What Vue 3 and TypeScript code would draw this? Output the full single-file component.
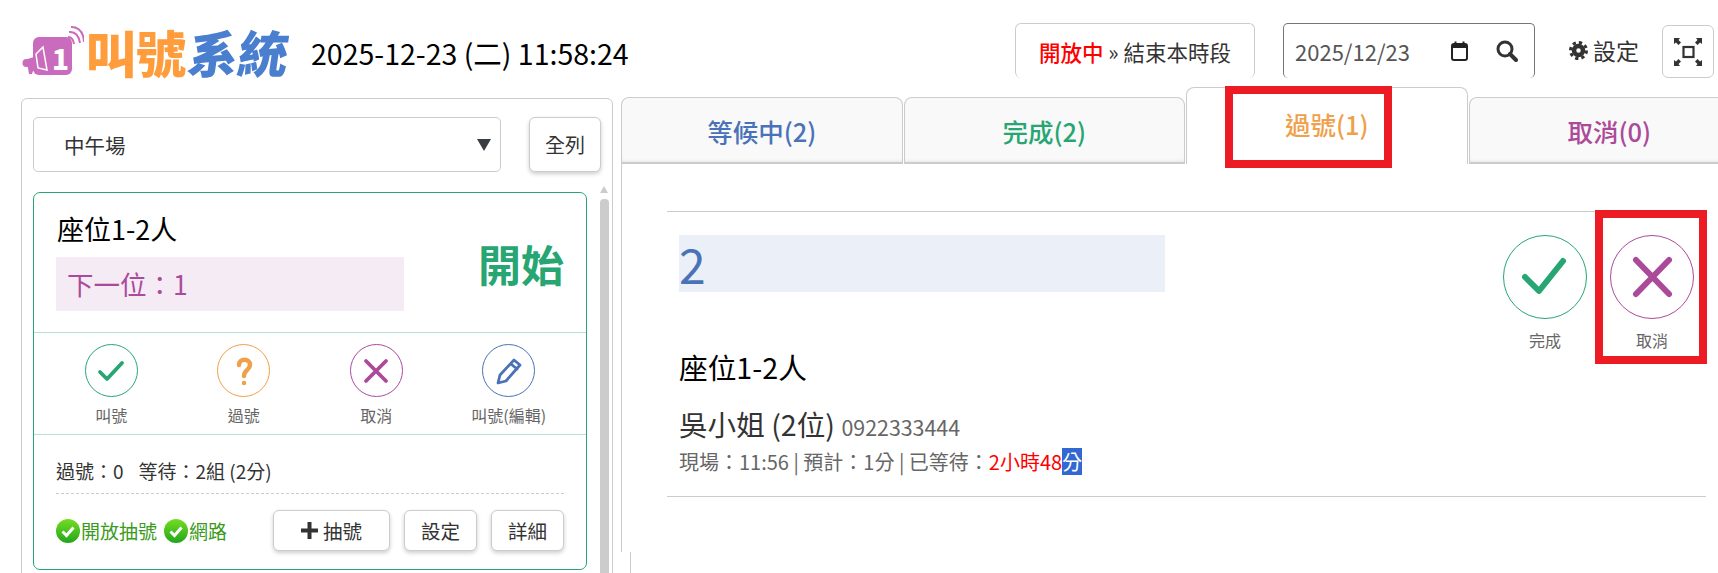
<template>
  <div class="page">
    <header class="top">
      <div class="logo">
        <svg class="logo-mark" width="62" height="54" viewBox="0 0 62 54">
          <rect x="11" y="11" width="39" height="38" rx="6" fill="#c96cbd" />
          <circle cx="4.500" cy="37" r="4" fill="#c96cbd" />
          <path d="M4 33.500 15 30v14l-4 1-1 3H7l-1-6z" fill="#c96cbd" />
          <path d="M14 28 21 21l4 23-9-2z" fill="#c96cbd" stroke="#fff" stroke-width="1.500" />
          <text x="30" y="44" class="logo-one">1</text>
          <path d="M46 11q5 0 6 7M47 6q9-1 11 11M49 1q12 0 13 15" fill="none" stroke="#c96cbd" stroke-width="2" />
        </svg>
        <div class="logo-text"><span class="orange">叫號</span><span class="blue">系統</span></div>
      </div>
      <div class="clock">2025-12-23 (二) 11:58:24</div>
      <button class="period"><span class="red">開放中</span> » 結束本時段</button>
      <div class="date-box">
        <span class="date-text">2025/12/23</span>
        <svg width="19" height="20" viewBox="0 0 19 20" class="cal">
          <rect x="2" y="3" width="15" height="16" rx="2" fill="#fff" stroke="#222" stroke-width="2" />
          <rect x="2" y="3" width="15" height="4" fill="#222" />
          <rect x="4.500" y="0.500" width="2" height="4" fill="#222" />
          <rect x="12.500" y="0.500" width="2" height="4" fill="#222" />
        </svg>
        <svg width="22" height="22" viewBox="0 0 22 22">
          <circle cx="9" cy="9" r="7" fill="none" stroke="#333" stroke-width="3" />
          <path d="M14 14l6 6" stroke="#333" stroke-width="4" stroke-linecap="round" />
        </svg>
      </div>
      <div class="settings">
        <svg width="19" height="19" viewBox="0 0 19 19">
          <circle cx="9.500" cy="9.500" r="4.500" fill="none" stroke="#333" stroke-width="4.500" />
          <circle cx="9.500" cy="9.500" r="8" fill="none" stroke="#333" stroke-width="3" stroke-dasharray="3.300 3" />
        </svg>
        <span>設定</span>
      </div>
      <button class="full">
        <svg width="28" height="28" viewBox="0 0 28 28">
          <rect x="9.500" y="9" width="10" height="10" fill="none" stroke="#333" stroke-width="2.200" />
          <path d="M0 0h6L4.500 2 7 4.500 4.500 7 2 4.500 0 6zM28 0h-6l1.500 2L21 4.500 23.500 7 26 4.500 28 6zM0 28h6l-1.500-2L7 23.500 4.500 21 2 23.500 0 22zM28 28h-6l1.500-2L21 23.500 23.500 21 26 23.500 28 22z" fill="#333" />
        </svg>
      </button>
    </header>

    <main class="main">
      <aside class="panel">
        <div class="panel-top">
          <div class="select">
            <span>中午場</span>
            <i class="caret"></i>
          </div>
          <button class="btn all">全列</button>
        </div>
        <div class="panel-body">
          <section class="card">
            <div class="card-head">
              <div class="card-info">
                <div class="card-title">座位1-2人</div>
                <div class="next">下一位：1</div>
              </div>
              <div class="start">開始</div>
            </div>
            <div class="card-actions">
              <div v-for="a in cardActions" :key="a.label" class="mini">
                <span class="ring" :style="{ borderColor: a.color }">
                  <svg width="32" height="32" viewBox="0 0 32 32" fill="none" :stroke="a.color" stroke-width="3.800" stroke-linecap="round" stroke-linejoin="round">
                    <path v-if="a.icon === 'check'" d="M5 17l7 7L27 8" />
                    <path v-else-if="a.icon === 'x'" d="M6 6l20 20M26 6L6 26" />
                    <path v-else-if="a.icon === 'pen'" stroke-width="2.800" d="M21 5l6 5-14 16-8 2 2-8zM18 9l6 5" />
                    <g v-else>
                      <path stroke-width="4.500" d="M11 10c0-7 11-7 11 0 0 5-6 5-6 11" />
                      <path stroke-width="4.500" d="M16 28v.1" />
                    </g>
                  </svg>
                </span>
                <span class="mini-label">{{ a.label }}</span>
              </div>
            </div>
            <div class="card-foot">
              <div class="stats"><span>過號：0</span><span>等待：2組 (2分)</span></div>
              <div class="foot-row">
                <div class="status">
                  <template v-for="s in statuses" :key="s">
                    <svg width="24" height="24" viewBox="0 0 24 24">
                      <defs>
                        <linearGradient :id="'g' + s" x1="0" y1="0" x2="0" y2="1">
                          <stop offset="0" stop-color="#74dd22" />
                          <stop offset="1" stop-color="#22a51c" />
                        </linearGradient>
                      </defs>
                      <circle cx="12" cy="12" r="12" :fill="`url(#g${s})`" />
                      <path d="M6.500 12.500l4 4 7-8" fill="none" stroke="#fff" stroke-width="3" />
                    </svg>
                    <span class="status-text">{{ s }}</span>
                  </template>
                </div>
                <button class="btn draw">
                  <svg width="17" height="17" viewBox="0 0 17 17"><path d="M6.500 0h4v6.500H17v4h-6.500V17h-4v-6.500H0v-4h6.500z" fill="#333" /></svg>
                  抽號
                </button>
                <button class="btn small">設定</button>
                <button class="btn small">詳細</button>
              </div>
            </div>
          </section>
          <div class="scrollbar">
            <i class="scroll-up"></i>
            <i class="scroll-thumb"></i>
          </div>
        </div>
      </aside>

      <section class="pane">
        <nav class="tabs">
          <div v-for="t in tabs" :key="t.label" class="tab" :class="{ active: t.active }" :style="{ color: t.color }">{{ t.label }}</div>
        </nav>
        <div class="content">
          <article class="row">
            <div class="row-main">
              <div class="number"><span>2</span></div>
              <div class="row-title">座位1-2人</div>
              <div class="guest">吳小姐 (2位) <span class="phone">0922333444</span></div>
              <div class="meta">現場：11:56 | 預計：1分 | 已等待：<span class="late">2小時48</span><span class="hl">分</span></div>
            </div>
            <div class="row-actions">
              <div class="big">
                <span class="big-ring green">
                  <svg width="46" height="46" viewBox="0 0 46 46" fill="none" stroke="#27a674" stroke-width="6" stroke-linecap="round" stroke-linejoin="round"><path d="M3 23l14 14L41 7" /></svg>
                </span>
                <span class="big-label">完成</span>
              </div>
              <div class="big">
                <span class="big-ring purple">
                  <svg width="46" height="46" viewBox="0 0 46 46" fill="none" stroke="#ac4a9a" stroke-width="6" stroke-linecap="round"><path d="M7 6l33 34M40 6L7 40" /></svg>
                </span>
                <span class="big-label">取消</span>
              </div>
            </div>
          </article>
        </div>
        <div class="pane-tail"></div>
      </section>
    </main>

    <div class="mark mark-tab"></div>
    <div class="mark mark-cancel"></div>
  </div>
</template>

<script setup lang="ts">
const cardActions = [
  { label: '叫號', icon: 'check', color: '#27a674' },
  { label: '過號', icon: 'q', color: '#f0a04b' },
  { label: '取消', icon: 'x', color: '#ac4a9a' },
  { label: '叫號(編輯)', icon: 'pen', color: '#4a72b8' },
];

const statuses = ['開放抽號', '網路'];

const tabs = [
  { label: '等候中(2)', color: '#4a72b8', active: false },
  { label: '完成(2)', color: '#27a674', active: false },
  { label: '過號(1)', color: '#f0a04b', active: true },
  { label: '取消(0)', color: '#ac4a9a', active: false },
];
</script>

<style>
html, body { margin: 0; background: #fff; overflow: hidden; }
</style>

<style scoped>
.page {
  position: relative;
  width: 1718px;
  height: 573px;
  overflow: hidden;
  font-family: "Noto Sans CJK TC", "Noto Sans", sans-serif;
  color: #333;
}
button { font-family: inherit; color: inherit; background: #fff; cursor: pointer; padding: 0; }

.top {
  height: 87px;
  display: flex;
  align-items: flex-start;
  box-sizing: border-box;
  padding-left: 22px;
}
.logo { display: flex; align-items: flex-start; margin-top: 26px; width: 266px; height: 50px; flex: none; }
.logo-mark { flex: none; }
.logo-one { font: 900 28px "Noto Sans CJK TC", sans-serif; fill: #fff; }
.logo-text {
  margin-left: 2px;
  font-size: 50px;
  font-weight: 900;
  line-height: 50px;
  white-space: nowrap;
}
.orange { color: #ff9c3b; }
.blue { color: #4a7fd0; display: inline-block; transform: skewX(-8deg); margin-left: 3px; }
.clock {
  margin: 32px 0 0 23px;
  font-size: 28.500px;
  line-height: 41px;
  color: #000;
  white-space: nowrap;
  width: 704px;
  flex: none;
}
.period {
  margin-top: 23px;
  width: 240px;
  height: 55px;
  border: 1px solid #ccc;
  border-bottom: 0;
  border-radius: 6px;
  font-size: 21.500px;
  flex: none;
}
.red { color: #f00; font-weight: 500; }
.date-box {
  margin: 23px 0 0 28px;
  width: 252px;
  height: 55px;
  box-sizing: border-box;
  border: 1px solid #767676;
  border-bottom: 0;
  border-radius: 5px;
  display: flex;
  align-items: center;
  padding: 0 16px 0 11px;
  flex: none;
}
.date-text { font-size: 22px; color: #555; width: 155px; }
.cal { margin-right: 27px; }
.settings {
  margin: 34px 0 0 34px;
  display: flex;
  align-items: center;
  gap: 5px;
  font-size: 23px;
  line-height: 32px;
  width: 93px;
  flex: none;
}
.full {
  margin-top: 25px;
  width: 52px;
  height: 53px;
  border: 1px solid #ccc;
  border-radius: 6px;
  display: flex;
  align-items: center;
  justify-content: center;
  flex: none;
}

.main { display: flex; align-items: flex-start; padding-left: 21px; }
.panel {
  margin-top: 11px;
  width: 592px;
  height: 520px;
  box-sizing: border-box;
  border: 1px solid #ccc;
  border-radius: 6px;
  padding: 18px 11px 0 11px;
  flex: none;
}
.panel-top { display: flex; justify-content: space-between; }
.select {
  width: 468px;
  height: 55px;
  box-sizing: border-box;
  border: 1px solid #ccc;
  border-radius: 5px;
  padding: 0 9px 0 30px;
  display: flex;
  align-items: center;
  justify-content: space-between;
  font-size: 20.500px;
}
.caret {
  width: 0;
  height: 0;
  border-left: 7px solid transparent;
  border-right: 7px solid transparent;
  border-top: 12px solid #3a3d42;
}
.btn {
  border: 1px solid #ccc;
  border-radius: 6px;
  box-shadow: 0 2px 4px rgba(0, 0, 0, .2);
  font-size: 20px;
}
.all { width: 72px; height: 55px; }
.panel-body { display: flex; gap: 13px; margin-top: 20px; }
.card {
  width: 554px;
  height: 378px;
  box-sizing: border-box;
  border: 1px solid #27a674;
  border-radius: 7px;
  flex: none;
}
.card-head {
  height: 140px;
  box-sizing: border-box;
  padding: 17px 22px 0;
  border-bottom: 1px solid #b4e4d0;
  display: flex;
  justify-content: space-between;
}
.card-title { font-size: 27px; line-height: 38px; color: #000; margin-left: 1px; }
.next {
  margin-top: 9px;
  width: 348px;
  height: 54px;
  box-sizing: border-box;
  padding-left: 11px;
  background: #f5ebf5;
  color: #ac4a9a;
  font-size: 26.500px;
  line-height: 54px;
}
.start {
  color: #27a674;
  font-size: 43px;
  font-weight: 700;
  line-height: 60px;
  margin-top: 23px;
}
.card-actions {
  height: 102px;
  box-sizing: border-box;
  padding: 11px 11px 0;
  border-bottom: 1px solid #b4e4d0;
  display: grid;
  grid-template-columns: repeat(4, 1fr);
}
.mini { display: flex; flex-direction: column; align-items: center; }
.ring {
  width: 53px;
  height: 53px;
  box-sizing: border-box;
  border: 1px solid;
  border-radius: 50%;
  display: flex;
  align-items: center;
  justify-content: center;
}
.mini-label { margin-top: 7px; font-size: 16px; line-height: 22px; color: #666; }
.card-foot { padding: 22px 22px 0; }
.stats {
  display: flex;
  gap: 15px;
  font-size: 19px;
  line-height: 28px;
  height: 36px;
  border-bottom: 1px dashed #ccc;
}
.foot-row { display: flex; align-items: center; margin-top: 16px; }
.status { display: flex; align-items: center; width: 217px; font-size: 19px; color: #3a9a1a; }
.status-text { margin: 0 7px 0 1px; }
.draw {
  width: 117px;
  height: 41px;
  display: flex;
  align-items: center;
  justify-content: center;
  gap: 5px;
  font-size: 19.500px;
}
.small { width: 73px; height: 41px; margin-left: 14px; font-size: 19.500px; }
.scrollbar { width: 9px; margin-top: -6px; display: flex; flex-direction: column; flex: none; }
.scroll-up {
  width: 0;
  height: 0;
  border-left: 4.500px solid transparent;
  border-right: 4.500px solid transparent;
  border-bottom: 7px solid #ccc;
}
.scroll-thumb { margin-top: 6px; height: 400px; background: #ccc; border-radius: 4px 4px 0 0; }

.pane { margin-left: 8px; width: 1200px; flex: none; }
.tabs { display: flex; align-items: flex-end; height: 77px; }
.tab {
  width: 281.500px;
  height: 67px;
  box-sizing: border-box;
  border: 1px solid #ccc;
  border-bottom-width: 2px;
  border-radius: 8px 8px 0 0;
  background: #f9f9f9;
  box-shadow: inset 0 -3px 4px -3px rgba(0, 0, 0, .12);
  margin-right: 1px;
  display: flex;
  align-items: center;
  justify-content: center;
  font-size: 25.500px;
  font-weight: 500;
  flex: none;
}
.tab.active {
  height: 77px;
  background: #fff;
  box-shadow: none;
  border-bottom: 0;
  padding-bottom: 5px;
}
.content {
  height: 388px;
  box-sizing: border-box;
  border-left: 1px solid #ccc;
  padding: 47px 0 0 45px;
}
.pane-tail { height: 22px; margin-left: 9px; border-left: 1px solid #ccc; }
.row {
  width: 1039px;
  height: 286px;
  box-sizing: border-box;
  border-top: 1px solid #ccc;
  border-bottom: 1px solid #ccc;
  padding: 23px 12px 0 12px;
  display: flex;
  justify-content: space-between;
}
.number {
  width: 486px;
  height: 57px;
  background: #ebeff8;
  color: #4a72b8;
  font-size: 48px;
  line-height: 57px;
}
.row-title { margin-top: 58px; font-size: 28.700px; line-height: 34px; color: #000; }
.guest { margin-top: 22px; font-size: 28.600px; line-height: 36px; }
.phone { font-size: 21.400px; color: #666; }
.meta { margin-top: 3px; font-size: 20px; line-height: 27px; color: #666; white-space: nowrap; }
.late { color: #f00; }
.hl { background: #3367d1; color: #fff; display: inline-block; }
.row-actions { display: flex; gap: 23px; }
.big { display: flex; flex-direction: column; align-items: center; width: 84px; }
.big-ring {
  width: 84px;
  height: 84px;
  box-sizing: border-box;
  border: 1px solid;
  border-radius: 50%;
  display: flex;
  align-items: center;
  justify-content: center;
}
.green { border-color: #27a674; }
.purple { border-color: #ac4a9a; }
.big-label { margin-top: 9px; font-size: 16px; line-height: 24px; color: #666; }

.mark { position: absolute; box-sizing: border-box; border: 8px solid #ed1c24; }
.mark-tab { left: 1225px; top: 86px; width: 167px; height: 82px; }
.mark-cancel { left: 1595px; top: 210px; width: 112px; height: 154px; }
</style>
